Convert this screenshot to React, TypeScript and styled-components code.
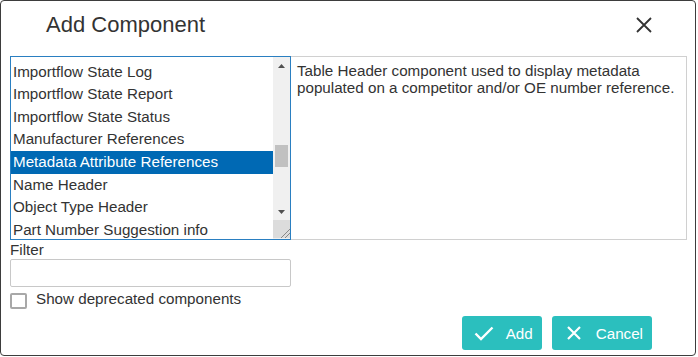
import React from "react";
import styled, { createGlobalStyle } from "styled-components";

const GlobalStyle = createGlobalStyle`
  html, body {
    margin: 0;
    padding: 0;
    background: #fff;
  }
  body {
    font-family: "Liberation Sans", Arial, sans-serif;
    color: #333;
  }
`;

const items = [
  "Importflow State Log",
  "Importflow State Report",
  "Importflow State Status",
  "Manufacturer References",
  "Metadata Attribute References",
  "Name Header",
  "Object Type Header",
  "Part Number Suggestion info",
];

const Window = styled.div`
  box-sizing: border-box;
  width: 696px;
  height: 356px;
  border: 1px solid #3d3d3d;
  border-radius: 4px;
  display: flex;
  flex-direction: column;
  overflow: hidden;
`;

const Header = styled.div`
  height: 55px;
  box-sizing: border-box;
  padding: 11px 43px 0 45px;
  display: flex;
  justify-content: space-between;
  align-items: flex-start;
`;

const Title = styled.h1`
  margin: 0;
  font-size: 22px;
  line-height: 26px;
  font-weight: normal;
  color: #333;
`;

const CloseButton = styled.button`
  border: 0;
  background: none;
  padding: 0;
  margin-top: 5px;
  width: 16px;
  height: 16px;
  display: flex;
  cursor: pointer;
`;

const Body = styled.div`
  padding: 0 0 0 9px;
  display: flex;
  flex-direction: column;
`;

const MainRow = styled.div`
  display: flex;
  height: 184px;
`;

const ListBox = styled.div`
  box-sizing: border-box;
  width: 281px;
  height: 184px;
  border: 1px solid #2a7fc1;
  display: flex;
  overflow: hidden;
`;

const List = styled.ul`
  flex: 1;
  margin: 0;
  padding: 3.6px 0 0;
  list-style: none;
  overflow: hidden;
`;

const Item = styled.li<{ $selected?: boolean }>`
  height: 22.6px;
  line-height: 22.6px;
  padding-left: 2px;
  font-size: 15.2px;
  white-space: nowrap;
  color: ${(p) => (p.$selected ? "#fff" : "#333")};
  background: ${(p) => (p.$selected ? "#0069b4" : "transparent")};
`;

const ScrollBar = styled.div`
  width: 17px;
  background: #f0f0f0;
  display: flex;
  flex-direction: column;
  padding-bottom: 1px;
`;

const ArrowButton = styled.div`
  height: 17px;
  display: flex;
  align-items: center;
  justify-content: center;
`;

const Track = styled.div`
  flex: 1;
`;

const Thumb = styled.div`
  margin: 0 2px;
  height: 22px;
  background: #c1c1c1;
`;

const Grip = styled.div`
  height: 18px;
  background: #dcdcdc;
  display: flex;
  align-items: flex-end;
  justify-content: flex-end;
`;

const Description = styled.div`
  box-sizing: border-box;
  width: 396px;
  height: 184px;
  border: 1px solid #d0d0d0;
  border-left: none;
  padding: 4.5px 6px;
  font-size: 15.2px;
  line-height: 17.5px;
  color: #333;
`;

const Label = styled.label`
  display: block;
  padding-top: 1px;
  font-size: 15.2px;
  line-height: 17px;
  color: #333;
`;

const FilterInput = styled.input`
  box-sizing: border-box;
  width: 281px;
  height: 28px;
  margin-top: 1px;
  border: 1px solid #c8c8c8;
  border-radius: 2px;
  font: 15px "Liberation Sans", Arial, sans-serif;
  padding: 0 6px;
  outline: none;
`;

const CheckRow = styled.label`
  display: flex;
  align-items: flex-start;
  gap: 9px;
  margin-top: 4px;
  font-size: 15.2px;
  line-height: 16px;
  color: #333;
`;

const Box = styled.span`
  box-sizing: border-box;
  width: 17px;
  height: 16px;
  margin-top: 2px;
  border: 2px solid #a8a8a8;
  border-radius: 2px;
`;

const Footer = styled.div`
  display: flex;
  justify-content: flex-end;
  gap: 10px;
  padding: 7px 43px 0 0;
`;

const Button = styled.button<{ $padLeft: number; $gap: number }>`
  height: 34px;
  box-sizing: border-box;
  display: flex;
  align-items: center;
  gap: ${(p) => p.$gap}px;
  padding: 0 9px 0 ${(p) => p.$padLeft}px;
  border: 0;
  border-radius: 3px;
  background: #2bbfbe;
  color: #fff;
  font: 15.2px "Liberation Sans", Arial, sans-serif;
  cursor: pointer;
`;

export default function App() {
  return (
    <>
      <GlobalStyle />
      <Window>
        <Header>
          <Title>Add Component</Title>
          <CloseButton aria-label="Close">
            <svg width="16" height="16" viewBox="0 0 16 16">
              <path d="M1 1 L15 15 M15 1 L1 15" stroke="#333" strokeWidth="1.8" />
            </svg>
          </CloseButton>
        </Header>
        <Body>
          <MainRow>
            <ListBox>
              <List>
                {items.map((it) => (
                  <Item key={it} $selected={it === "Metadata Attribute References"}>
                    {it}
                  </Item>
                ))}
              </List>
              <ScrollBar>
                <ArrowButton>
                  <svg width="7" height="4" viewBox="0 0 7 4">
                    <path d="M0 4 L3.5 0 L7 4 Z" fill="#505050" />
                  </svg>
                </ArrowButton>
                <Track>
                  <Thumb style={{ marginTop: 71 }} />
                </Track>
                <ArrowButton>
                  <svg width="7" height="4" viewBox="0 0 7 4">
                    <path d="M0 0 L7 0 L3.5 4 Z" fill="#505050" />
                  </svg>
                </ArrowButton>
                <Grip>
                  <svg width="10" height="10" viewBox="0 0 10 10">
                    <path d="M1 10 L10 1 M5 10 L10 5" stroke="#888" strokeWidth="1" />
                  </svg>
                </Grip>
              </ScrollBar>
            </ListBox>
            <Description>
              Table Header component used to display metadata populated on a competitor and/or OE number reference.
            </Description>
          </MainRow>
          <Label>Filter</Label>
          <FilterInput />
          <CheckRow>
            <Box />
            Show deprecated components
          </CheckRow>
        </Body>
        <Footer>
          <Button $padLeft={12} $gap={12}>
            <svg width="20" height="15" viewBox="0 0 20 15">
              <path d="M1.5 7.5 L7 13 L18.5 1.5" stroke="#fff" strokeWidth="2.4" fill="none" />
            </svg>
            Add
          </Button>
          <Button $padLeft={15} $gap={15}>
            <svg width="14" height="14" viewBox="0 0 14 14">
              <path d="M1 1 L13 13 M13 1 L1 13" stroke="#fff" strokeWidth="2.2" />
            </svg>
            Cancel
          </Button>
        </Footer>
      </Window>
    </>
  );
}
